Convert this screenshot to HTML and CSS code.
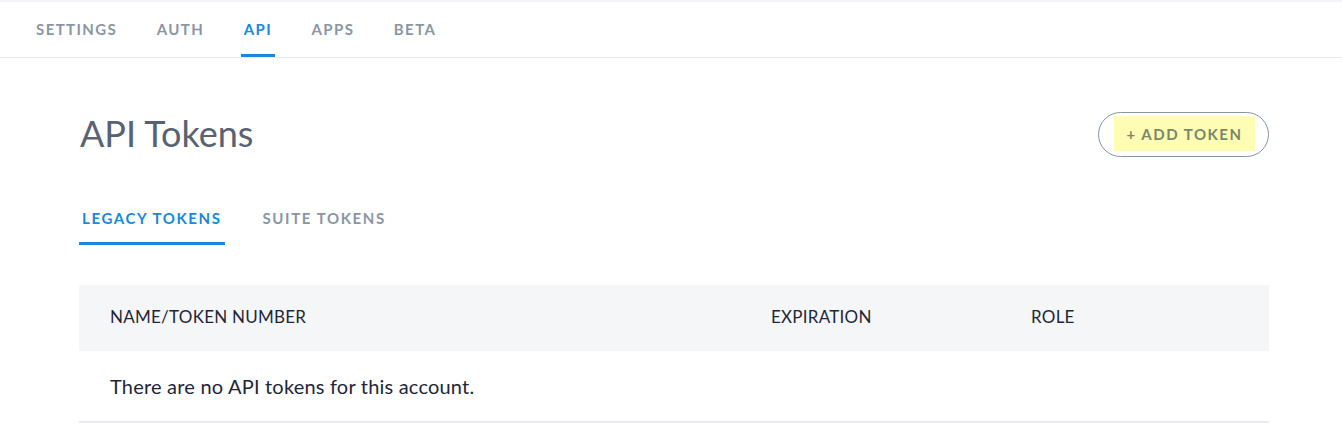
FILE: index.html
```html
<!DOCTYPE html>
<html>
<head>
<meta charset="utf-8">
<link rel="stylesheet" href="styles.css">
</head>
<body>
<div class="topstrip"></div>
<nav class="nav">
  <a class="nav-item">SETTINGS</a>
  <a class="nav-item">AUTH</a>
  <a class="nav-item active">API</a>
  <a class="nav-item">APPS</a>
  <a class="nav-item">BETA</a>
</nav>
<main class="main">
  <div class="title-row">
    <h1 class="title">API Tokens</h1>
    <button class="add-btn"><span class="add-inner">+ ADD TOKEN</span></button>
  </div>
  <div class="subtabs">
    <a class="subtab active">LEGACY TOKENS</a>
    <a class="subtab">SUITE TOKENS</a>
  </div>
  <div class="table">
    <div class="thead">
      <div class="th">NAME/TOKEN NUMBER</div>
      <div class="th">EXPIRATION</div>
      <div class="th">ROLE</div>
    </div>
    <div class="empty">There are no API tokens for this account.</div>
  </div>
</main>
</body>
</html>
```
FILE: styles.css
```css
html, body {
  margin: 0;
  padding: 0;
  background: #fff;
  font-family: Lato, "Noto Sans", sans-serif;
}
.topstrip {
  height: 2px;
  background: #f3f4f7;
}
.nav {
  display: flex;
  gap: 33.5px;
  padding-left: 33px;
  height: 55px;
  border-bottom: 1px solid #e9ebee;
  align-items: stretch;
}
.nav-item {
  display: flex;
  align-items: center;
  padding: 2px 3px 0;
  font-size: 15px;
  font-weight: 700;
  letter-spacing: 1.4px;
  color: #8a96a4;
  border-bottom: 3px solid transparent;
  box-sizing: border-box;
}
.nav-item.active {
  color: #1a87dc;
  border-bottom-color: #1a87dc;
}
.main {
  padding-left: 79px;
  width: 1190px;
}
.title-row {
  display: flex;
  justify-content: space-between;
  align-items: center;
  margin-top: 54px;
  height: 45px;
}
.title {
  margin: 0 0 4px;
  font-size: 36px;
  font-weight: 400;
  color: #576373;
  padding-left: 1px;
}
.add-btn {
  height: 45px;
  width: 171px;
  border: 1px solid #8794a4;
  border-radius: 23px;
  background: #fff;
  padding: 3px 13px 5px 15px;
  box-sizing: border-box;
  display: flex;
  align-items: stretch;
  font-family: inherit;
}
.add-inner {
  flex: 1;
  background: #fffcb3;
  display: flex;
  align-items: center;
  justify-content: center;
  font-size: 15px;
  font-weight: 700;
  letter-spacing: 1.5px;
  color: #78896a;
}
.subtabs {
  display: flex;
  gap: 35px;
  margin-top: 40px;
  height: 48px;
}
.subtab {
  display: flex;
  align-items: center;
  padding: 0 3px 4px;
  font-size: 15px;
  font-weight: 700;
  letter-spacing: 1.6px;
  color: #8a96a4;
  border-bottom: 3px solid transparent;
  box-sizing: border-box;
}
.subtab.active {
  color: #1a87dc;
  border-bottom-color: #1a87dc;
}
.table {
  margin-top: 40px;
}
.thead {
  display: grid;
  grid-template-columns: 661px 260px 1fr;
  height: 66px;
  align-items: center;
  background: #f5f6f8;
}
.th {
  padding-left: 31px;
  padding-bottom: 3px;
  font-size: 17px;
  letter-spacing: 0.25px;
  color: #1e2737;
}
.empty {
  height: 70px;
  display: flex;
  align-items: center;
  padding-left: 31px;
  font-size: 20px;
  letter-spacing: 0.2px;
  color: #1e2737;
  border-bottom: 2px solid #e8ecf0;
}
```
